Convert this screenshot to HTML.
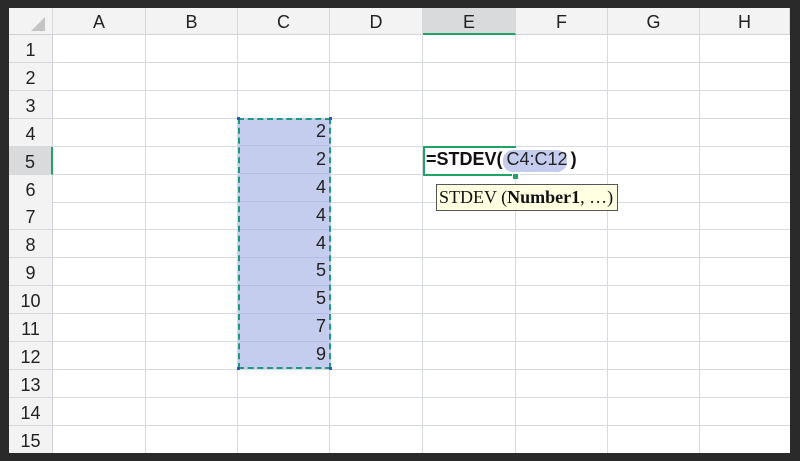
<!DOCTYPE html>
<html><head><style>
body{margin:0;width:800px;height:461px;background:#2a2a2a;overflow:hidden;position:relative;font-family:"Liberation Sans",sans-serif}
.sheet{position:absolute;left:9px;top:8px;width:781px;height:445px;background:#fff;overflow:hidden}
.a{position:absolute}
.ch{position:absolute;top:0;height:27px;background:#f3f3f3;border-right:1px solid #d6d8de;border-bottom:1px solid #d0d2d8;font-size:18px;color:#222;text-align:center;line-height:29px;box-sizing:border-box}
.rh{position:absolute;left:0;width:44px;background:#f3f3f3;border-right:1px solid #d0d2d8;border-bottom:1px solid #d6d8de;font-size:18px;color:#222;text-align:center;box-sizing:border-box}
.vl{position:absolute;top:27px;width:1px;height:420px;background:#d8dae2}
.hl{position:absolute;left:44px;height:1px;width:740px;background:#d8dae2}
.num{position:absolute;left:229px;width:88px;text-align:right;font-size:18px;color:#222}
</style></head><body>
<div class="sheet">
<div class="ch" style="left:0;width:44px"><div class="a" style="left:22px;top:9px;width:0;height:0;border-left:14px solid transparent;border-bottom:14px solid #c4c4c4"></div></div>
<div class="ch" style="left:44px;width:93px">A</div>
<div class="ch" style="left:137px;width:92px">B</div>
<div class="ch" style="left:229px;width:92px">C</div>
<div class="ch" style="left:321px;width:93px">D</div>
<div class="ch" style="left:414px;width:93px;background:#d9dadc;border-bottom:2px solid #21a366">E</div>
<div class="ch" style="left:507px;width:92px">F</div>
<div class="ch" style="left:599px;width:92px">G</div>
<div class="ch" style="left:691px;width:90px">H</div>

<div class="vl" style="left:136px"></div><div class="vl" style="left:228px"></div><div class="vl" style="left:320px"></div><div class="vl" style="left:413px"></div><div class="vl" style="left:506px"></div><div class="vl" style="left:598px"></div><div class="vl" style="left:690px"></div>

<div id="rows"></div>

<div class="a" style="left:229px;top:110px;width:93px;height:251px;background:#c5cdef;box-sizing:border-box;border:2px dashed #1f9a7f"></div>
<div class="a" style="left:228px;top:109px;width:3px;height:3px;background:#3355bb"></div>
<div class="a" style="left:320px;top:109px;width:3px;height:3px;background:#3355bb"></div>
<div class="a" style="left:228px;top:359px;width:3px;height:3px;background:#3355bb"></div>
<div class="a" style="left:320px;top:359px;width:3px;height:3px;background:#3355bb"></div>
<div class="hl" style="left:231px;width:89px;top:137px;background:#b6bfe3"></div>
<div class="hl" style="left:231px;width:89px;top:165px;background:#b6bfe3"></div>
<div class="hl" style="left:231px;width:89px;top:193px;background:#b6bfe3"></div>
<div class="hl" style="left:231px;width:89px;top:221px;background:#b6bfe3"></div>
<div class="hl" style="left:231px;width:89px;top:249px;background:#b6bfe3"></div>
<div class="hl" style="left:231px;width:89px;top:277px;background:#b6bfe3"></div>
<div class="hl" style="left:231px;width:89px;top:305px;background:#b6bfe3"></div>
<div class="hl" style="left:231px;width:89px;top:333px;background:#b6bfe3"></div>
<div class="num" style="top:113px">2</div>
<div class="num" style="top:141px">2</div>
<div class="num" style="top:169px">4</div>
<div class="num" style="top:197px">4</div>
<div class="num" style="top:225px">4</div>
<div class="num" style="top:252px">5</div>
<div class="num" style="top:280px">5</div>
<div class="num" style="top:308px">7</div>
<div class="num" style="top:336px">9</div>

<div class="a" style="left:414px;top:138px;width:93px;height:30px;background:#fff;box-sizing:border-box;border:2px solid #21a366;border-right:none"></div>
<div class="a" style="left:503px;top:165px;width:5px;height:5px;background:#21a366;border:1px solid #fff"></div>
<div class="a" style="left:494px;top:142px;width:64px;height:22px;background:#c5cdef;border-radius:10px"></div>
<div class="a" style="left:417px;top:141px;font-size:18px;font-weight:bold;color:#111;white-space:nowrap">=STDEV(<span style="font-weight:normal;color:#222;padding:0 3px 0 4px">C4:C12</span>)</div>
<div class="a" style="left:427px;top:176px;width:182px;height:27px;background:#ffffe1;border:1px solid #555;box-sizing:border-box;font-family:'Liberation Serif',serif;font-size:18px;line-height:25px;padding-left:2px;color:#111;white-space:nowrap">STDEV (<b>Number1</b>, …)</div>
</div>
<script>
var h='';for(var i=1;i<=15;i++){var t=27+(i-1)*27.9;var sel=i==5;
h+='<div class="rh" style="top:'+t+'px;height:28px;line-height:30px;'+(sel?'background:#d9dadc;border-right:2px solid #21a366;':'')+'">'+i+'</div>';
h+='<div class="hl" style="top:'+(t+27)+'px"></div>';}
document.getElementById('rows').innerHTML=h;
</script>
</body></html>
